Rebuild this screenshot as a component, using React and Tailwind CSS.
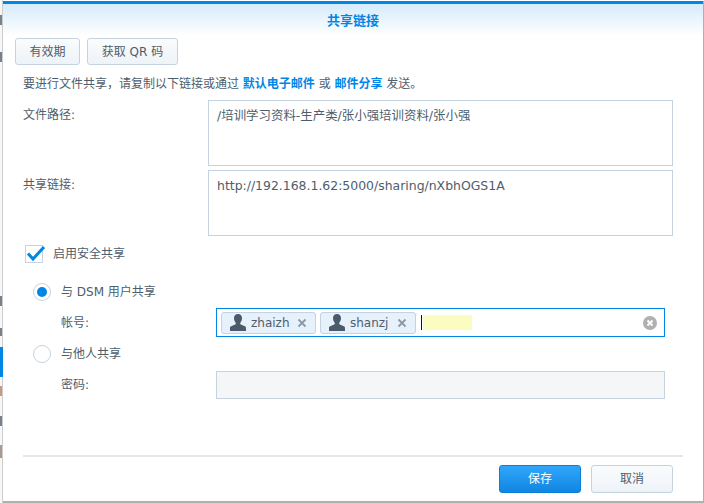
import React from 'react';

const User = () => (
  <svg width="16" height="17" viewBox="0 0 16 17" className="shrink-0">
    <path d="M8 0C5.4 0 4 1.9 4 4.3c0 1.8.7 3.3 1.7 4.4v1.5L.6 12.6C0 13 0 13.700 0 17h16c0-3.300 0-4-.6-4.400l-5.100-2.400V8.700C11.300 7.600 12 6.100 12 4.300 12 1.900 10.600 0 8 0z" fill="#4a5a6a" />
  </svg>
);

const Tag = ({ name, w }) => (
  <div className={`flex items-center h-[22px] bg-[#e6f1fc] border border-[#c5d3e0] rounded-[3px] pl-2 text-[12px] text-[#4e5d6c] ${w}`}>
    <User />
    <span className="ml-[5px] flex-1">{name}</span>
    <svg width="10" height="10" viewBox="0 0 10 10" className="mr-2 shrink-0">
      <path d="M1.500 1.500l7 7M8.500 1.500l-7 7" stroke="#8b98a5" strokeWidth="1.800" />
    </svg>
  </div>
);

const App = () => {
  return (
    <div className="w-[704px] h-[503px] flex bg-white overflow-hidden text-[#4e5d6c] text-[12px] font-['DejaVu_Sans','Noto_Sans_CJK_SC',sans-serif]">
      {/* sliver of the window behind the dialog */}
      <div className="w-[3px] shrink-0 bg-[#f7f7f7] border-r border-[#cccccc] flex flex-col">
        <div className="h-[15px]" />
        <div className="h-[10px] w-[2px] bg-[#77818c]" />
        <div className="h-[27px]" />
        <div className="h-[10px] w-[2px] bg-[#77818c]" />
        <div className="h-[234px]" />
        <div className="h-[10px] w-[2px] bg-[#77818c]" />
        <div className="h-[22px]" />
        <div className="h-[8px] w-[2px] bg-[#77818c]" />
        <div className="h-[11px]" />
        <div className="h-[30px] w-[3px] bg-[#0086e5]" />
        <div className="h-[9px]" />
        <div className="h-[10px] w-[2px] bg-[#c49a80]" />
        <div className="h-[20px]" />
        <div className="h-[10px] w-[2px] bg-[#77818c]" />
        <div className="h-[19px]" />
        <div className="h-[13px] w-[2px] bg-[#a89a90]" />
      </div>
      <div className="w-[701px] h-[502px] mt-px bg-white border-r border-b-2 border-[#b0b0b0] flex flex-col">
        <div className="h-[3px] bg-[#0086e5]" />
        <div className="h-[32px] bg-gradient-to-b from-[#d6ebfa] to-white flex items-center justify-center pt-[1px] text-[13px] font-bold text-[#0086e5]">
          共享链接
        </div>

        <div className="flex gap-[7px] pl-[12px] mt-[2px]">
          <button className="w-[65px] h-[27px] rounded-[3px] border border-[#c5d3e0] bg-gradient-to-b from-[#fafcfd] to-[#eef3f8]">有效期</button>
          <button className="w-[91px] h-[27px] rounded-[3px] border border-[#c5d3e0] bg-gradient-to-b from-[#fafcfd] to-[#eef3f8]">获取 QR 码</button>
        </div>

        <div className="pl-[20px] mt-[10px] h-[18px] leading-[18px]">
          要进行文件共享，请复制以下链接或通过 <span className="font-bold text-[#0086e5]">默认电子邮件</span> 或 <span className="font-bold text-[#0086e5]">邮件分享</span> 发送。
        </div>

        <div className="flex mt-[7px] pl-[20px]">
          <div className="w-[185px] pt-[6px]">文件路径:</div>
          <div className="w-[465px] h-[66px] border border-[#c5d3e0] px-2 py-[7px] leading-[16px] text-[12.450px]">/培训学习资料-生产类/张小强培训资料/张小强</div>
        </div>
        <div className="flex mt-[4px] pl-[20px]">
          <div className="w-[185px] pt-[6px]">共享链接:</div>
          <div className="w-[465px] h-[66px] border border-[#c5d3e0] px-2 py-[7px] leading-[16px] text-[12.450px]">http://192.168.1.62:5000/sharing/nXbhOGS1A</div>
        </div>

        <div className="flex items-center mt-[9px] pl-[22px] h-[18px]">
          <div className="relative w-[18px] h-[18px] border border-[#c5d3e0]">
            <svg width="20" height="18" viewBox="0 0 20 18" className="absolute left-0 -top-[1px]">
              <path d="M2 8.500l5 5.500L18 2" fill="none" stroke="#0086e5" strokeWidth="3" />
            </svg>
          </div>
          <span className="ml-[10px]">启用安全共享</span>
        </div>

        <div className="flex items-center mt-[20px] pl-[30px] h-[18px]">
          <div className="w-[18px] h-[18px] rounded-full border border-[#c5d3e0] flex items-center justify-center">
            <div className="w-[10px] h-[10px] rounded-full bg-[#0086e5]" />
          </div>
          <span className="ml-[10px]">与 DSM 用户共享</span>
        </div>

        <div className="flex items-center mt-[7px] pl-[58px] h-[29px]">
          <div className="w-[155px]">帐号:</div>
          <div className="w-[449px] h-[29px] border border-[#0086e5] flex items-center pl-[4px] gap-[4px]">
            <Tag name="zhaizh" w="w-[95px]" />
            <Tag name="shanzj" w="w-[96px]" />
            <div className="w-px h-[15px] bg-[#101040] ml-[1px]" />
            <div className="w-[49px] h-[15px] bg-[#fbfdc0] -ml-[3px]" />
            <div className="flex-1" />
            <svg width="14" height="14" viewBox="0 0 14 14" className="mr-[7px]">
              <circle cx="7" cy="7" r="7" fill="#b0b0b0" />
              <path d="M4.500 4.500l5 5M9.500 4.500l-5 5" stroke="#fff" strokeWidth="2" />
            </svg>
          </div>
        </div>

        <div className="flex items-center mt-[8px] pl-[30px] h-[18px]">
          <div className="w-[18px] h-[18px] rounded-full border border-[#c5d3e0]" />
          <span className="ml-[10px]">与他人共享</span>
        </div>

        <div className="flex items-center mt-[8px] pl-[58px] h-[28px]">
          <div className="w-[155px]">密码:</div>
          <div className="w-[449px] h-[28px] border border-[#c5d3e0] bg-[#f5f6f8]" />
        </div>

        <div className="h-[2px] bg-[#e6e6e6] ml-[20px] mt-[56px] shrink-0 w-[660px]" />

        <div className="flex justify-end gap-[10px] pr-[30px] mt-[8px]">
          <button className="w-[82px] h-[28px] rounded-[3px] border border-[#0b7fd6] bg-gradient-to-b from-[#2fa6fb] to-[#0f86e2] text-white">保存</button>
          <button className="w-[82px] h-[28px] rounded-[3px] border border-[#c5d3e0] bg-gradient-to-b from-[#fafcfd] to-[#eef3f8]">取消</button>
        </div>
      </div>
    </div>
  );
};

export default App;
